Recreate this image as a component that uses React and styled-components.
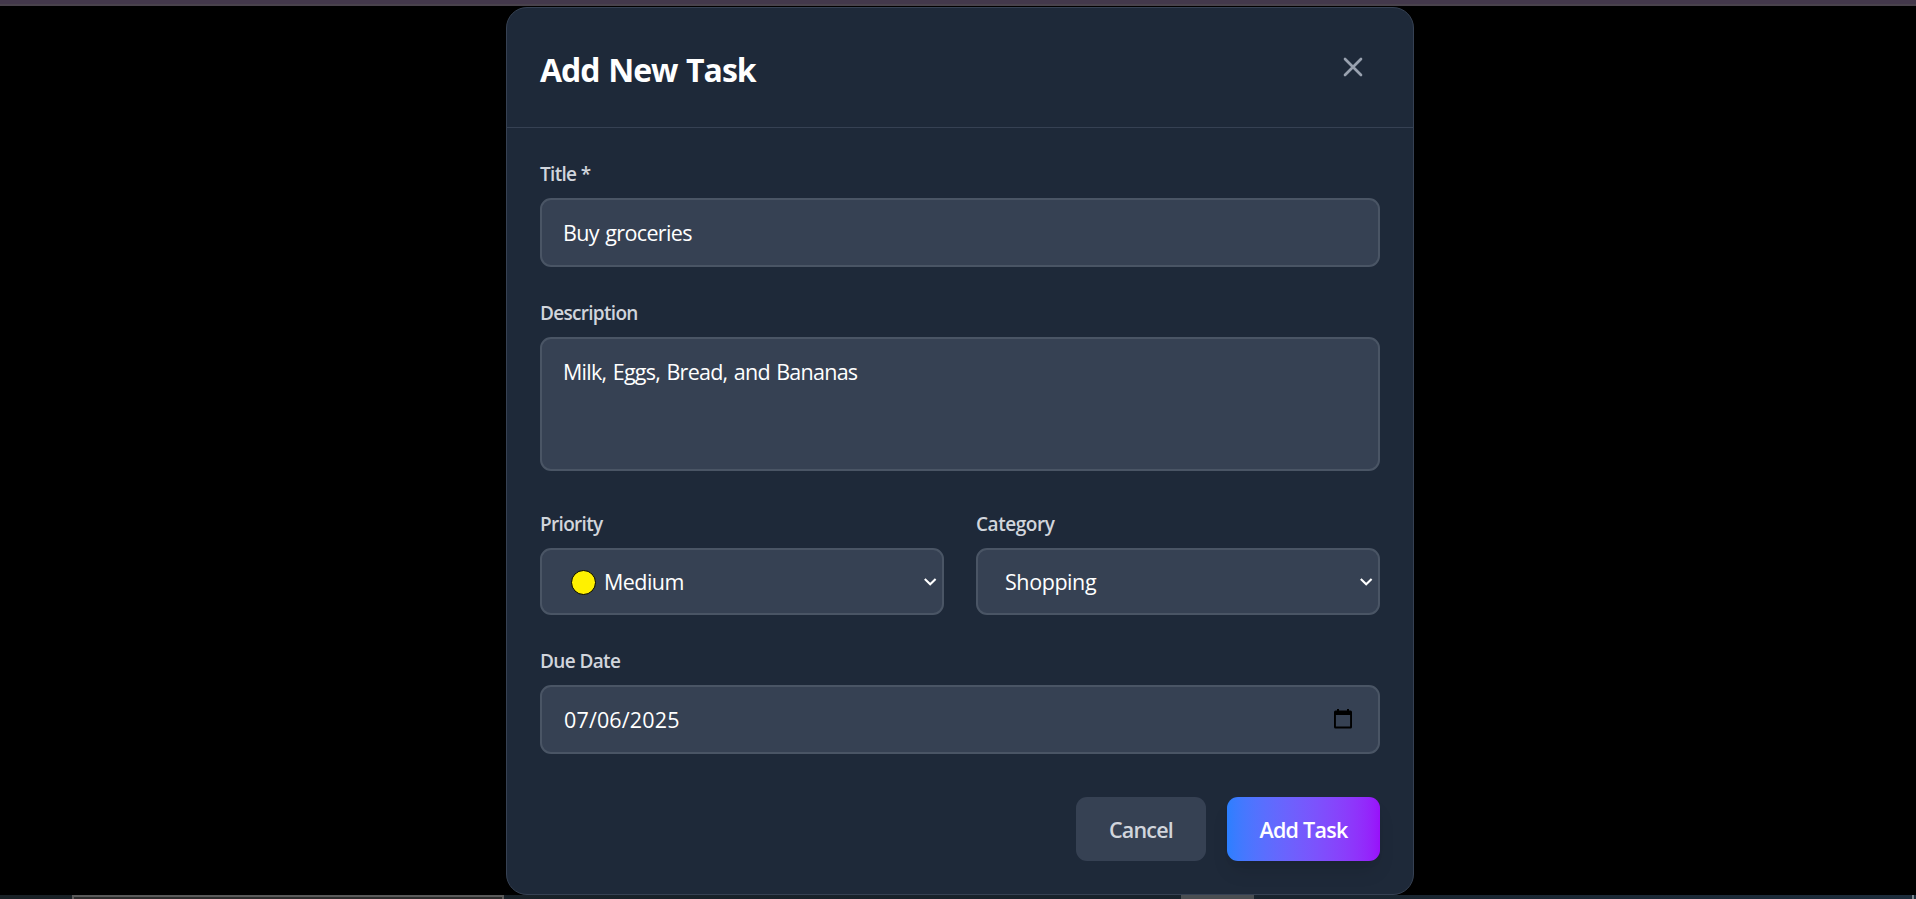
import React from "react";
import styled, { createGlobalStyle } from "styled-components";

const GlobalStyle = createGlobalStyle`
  *, *::before, *::after { box-sizing: border-box; }
  body {
    margin: 0;
    background: #000;
    overflow: hidden;
    font-family: "Segoe UI", "Open Sans", "Noto Sans", sans-serif;
  }
  input, textarea, button { font-family: inherit; }
`;

const Page = styled.div`
  display: flex;
  flex-direction: column;
  width: 100%;
  height: 100vh;
  background: #000;
`;

const TopStrip = styled.div`
  flex: none;
  height: 6px;
  background: #43384b;
  border-bottom: 2px solid #49424c;
`;

const Overlay = styled.div`
  flex: 1;
  display: flex;
  justify-content: center;
  padding: 1px 0 0 4px;
`;

const BottomStrip = styled.div`
  flex: none;
  display: flex;
  height: 4px;
  padding-left: 72px;
  background: linear-gradient(90deg, #192126 0%, #18222b 60%, #1d2d3c 100%);
`;

const WindowEdge = styled.div`
  width: 432px;
  border: 2px solid #5a5a5a;
  border-bottom: 0;
  background: #2d2d2d;
`;

const TabEdge = styled.div`
  width: 73px;
  margin-left: 677px;
  background: #4a4e52;
`;

const CornerEdge = styled.div`
  width: 2px;
  margin: 0 2px 0 auto;
  background: #7b8790;
`;

const Modal = styled.section`
  display: flex;
  flex-direction: column;
  width: 908px;
  height: 888px;
  background: #1e2939;
  border: 1px solid #364153;
  border-radius: 21px;
`;

const Header = styled.header`
  display: flex;
  align-items: center;
  justify-content: space-between;
  height: 120px;
  padding: 0 44px 0 33px;
  border-bottom: 1px solid #364153;
`;

const Heading = styled.h2`
  margin: 4px 0 0;
  font-size: 32px;
  line-height: 42px;
  font-weight: 700;
  letter-spacing: -1.05px;
  word-spacing: 1.5px;
  color: #fff;
`;

const CloseButton = styled.button`
  display: flex;
  margin-bottom: 1px;
  padding: 0;
  border: 0;
  background: none;
  color: #99a1af;
`;

const Form = styled.form`
  display: flex;
  flex-direction: column;
  padding: 32px 33px 0;
`;

const Field = styled.div`
  display: flex;
  flex-direction: column;
  flex: 1;
  margin-bottom: ${(p) => p.$gap || 0}px;
`;

const Label = styled.label`
  height: 28px;
  margin-bottom: 10px;
  font-size: 19px;
  line-height: 28px;
  font-weight: 600;
  letter-spacing: ${(p) => p.$track || 0}px;
  color: #d1d5dc;
`;

const control = `
  width: 100%;
  border: 2px solid #4a5565;
  border-radius: 11px;
  background: #364153;
  color: #fff;
  font-size: 21.5px;
  line-height: 32px;
  outline: none;
`;

const TextInput = styled.input`
  ${control}
  height: 69px;
  padding: 0 21px 1px;
  letter-spacing: ${(p) => p.$track || 0}px;
  word-spacing: 1.5px;
`;

const TextArea = styled.textarea`
  ${control}
  display: block;
  height: 134px;
  padding: 17px 21px;
  resize: none;
  letter-spacing: ${(p) => p.$track || 0}px;
  word-spacing: 1.5px;
`;

const SelectBox = styled.div`
  ${control}
  display: flex;
  align-items: center;
  height: 67px;
  padding: 0 4px 0 ${(p) => p.$indent}px;
  letter-spacing: ${(p) => p.$track || 0}px;
`;

const SelectText = styled.span`
  flex: 1;
`;

const Dot = styled.span`
  width: 25px;
  height: 25px;
  margin: 2px 8px 0 0;
  border: 1.5px solid #000;
  border-radius: 50%;
  background: #fff100;
`;

const DateBox = styled.div`
  ${control}
  display: flex;
  align-items: center;
  justify-content: space-between;
  height: 69px;
  padding: 0 26px 0 22px;
  letter-spacing: ${(p) => p.$track || 0}px;

  svg { margin-bottom: 1px; }
`;

const Columns = styled.div`
  display: flex;
  gap: 32px;
`;

const Actions = styled.div`
  display: flex;
  justify-content: flex-end;
  gap: 21px;
`;

const Button = styled.button`
  width: ${(p) => p.$width}px;
  height: 64px;
  padding: 2px 0 0;
  border: 0;
  border-radius: 11px;
  font-size: 21.5px;
  line-height: 32px;
  font-weight: 600;
  letter-spacing: ${(p) => p.$track || 0}px;
  color: ${(p) => (p.$primary ? "#fff" : "#d1d5dc")};
  background: ${(p) =>
    p.$primary ? "linear-gradient(to right in oklab, #2b7fff, #9810fa)" : "#364153"};
  box-shadow: ${(p) =>
    p.$primary
      ? "0 13px 20px -4px rgba(0,0,0,.1), 0 5px 8px -5px rgba(0,0,0,.1)"
      : "none"};
`;

const Chevron = () => (
  <svg width="16" height="16" viewBox="0 0 16 16" fill="none">
    <path d="M2.8 5 L8.2 10.2 L13.6 5" stroke="#fff" strokeWidth="2.1" />
  </svg>
);

const CalendarIcon = () => (
  <svg width="18" height="20" viewBox="0 0 18 20">
    <path
      fill="#000"
      fillRule="evenodd"
      d="M3 0h2v1.5h8V0h2v1.5h1.5A1.5 1.5 0 0 1 18 3v15a1.5 1.5 0 0 1-1.5 1.5h-15A1.5 1.5 0 0 1 0 18V3a1.5 1.5 0 0 1 1.5-1.5H3zM1.9 6v11.6h14.2V6z"
    />
  </svg>
);

export default function App() {
  return (
    <>
      <GlobalStyle />
      <Page>
        <TopStrip />
        <Overlay>
          <Modal>
            <Header>
              <Heading>Add New Task</Heading>
              <CloseButton type="button" aria-label="Close">
                <svg width="32" height="32" viewBox="0 0 24 24" fill="none" stroke="currentColor" strokeWidth="2" strokeLinecap="round" strokeLinejoin="round">
                  <path d="M6 18L18 6M6 6l12 12" />
                </svg>
              </CloseButton>
            </Header>
            <Form>
              <Field $gap={32}>
                <Label $track={-0.68}>Title *</Label>
                <TextInput $track={-0.65} defaultValue="Buy groceries" />
              </Field>
              <Field $gap={39}>
                <Label $track={-0.7}>Description</Label>
                <TextArea $track={-0.74} defaultValue="Milk, Eggs, Bread, and Bananas" />
              </Field>
              <Columns>
                <Field $gap={32}>
                  <Label $track={-0.68}>Priority</Label>
                  <SelectBox $indent={29} $track={-0.55}>
                    <Dot />
                    <SelectText>Medium</SelectText>
                    <Chevron />
                  </SelectBox>
                </Field>
                <Field $gap={32}>
                  <Label $track={-0.45}>Category</Label>
                  <SelectBox $indent={27} $track={-0.42}>
                    <SelectText>Shopping</SelectText>
                    <Chevron />
                  </SelectBox>
                </Field>
              </Columns>
              <Field $gap={43}>
                <Label $track={-0.62}>Due Date</Label>
                <DateBox $track={0.15}>
                  07/06/2025
                  <CalendarIcon />
                </DateBox>
              </Field>
              <Actions>
                <Button type="button" $width={130} $track={-0.8}>Cancel</Button>
                <Button type="button" $width={153} $track={-0.75} $primary>Add Task</Button>
              </Actions>
            </Form>
          </Modal>
        </Overlay>
        <BottomStrip>
          <WindowEdge />
          <TabEdge />
          <CornerEdge />
        </BottomStrip>
      </Page>
    </>
  );
}
